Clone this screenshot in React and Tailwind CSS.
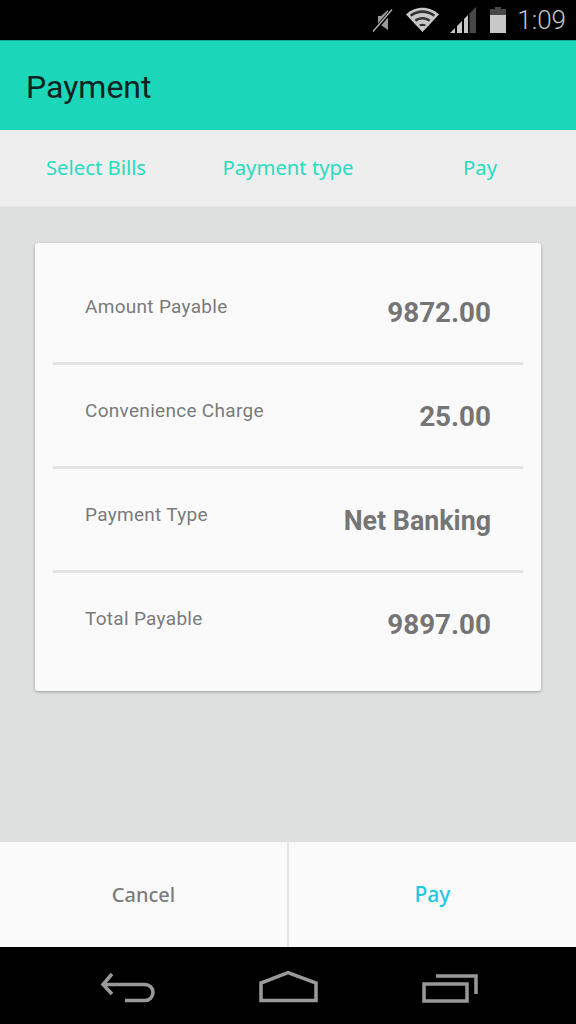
const rows = [
  { label: 'Amount Payable', value: '9872.00', size: 'text-[27.800px]' },
  { label: 'Convenience Charge', value: '25.00', size: 'text-[27.800px]' },
  { label: 'Payment Type', value: 'Net Banking', size: 'text-[26.800px]' },
  { label: 'Total Payable', value: '9897.00', size: 'text-[27.800px]' },
];

function StatusBar() {
  return (
    <div className="h-10 bg-black flex items-center justify-end">
      {/* muted speaker */}
      <svg width="24" height="26" viewBox="0 0 24 26" className="mr-[11px]">
        <path d="M7 9h3l7-6v20l-7-5H7z" fill="#9a9a9a" />
        <path d="M3 24 21 3" stroke="#000" strokeWidth="3.500" />
        <path d="M2 24.500 21 2.500" stroke="#b4b4b4" strokeWidth="1.300" />
      </svg>
      {/* wifi */}
      <svg width="33" height="26" viewBox="0 0 33 26" className="mr-[11px]">
        <path d="M16.500 25 0 7.500C9-1.500 24-1.500 33 7.500L16.500 25z" fill="#c8c8c8" />
        <path d="M3.800 7.800c7.500-6 18-6 25.400 0l-1.700 1.900c-6.500-5-15.500-5-22 0zM8.500 12.800c5-3.800 11-3.800 16 0l-1.700 1.900c-4-3-8.600-3-12.600 0zM13 17.700c2.200-1.300 4.800-1.300 7 0l-1.600 1.700c-1.200-.6-2.600-.6-3.800 0z" fill="#000" opacity="0.75" />
      </svg>
      {/* signal */}
      <svg width="26" height="26" viewBox="0 0 26 26" className="mr-[14px]">
        <path d="M19.500 6.500 26 0v26h-6.500z" fill="#484848" />
        <path d="M0 26 5 21v5zM7 26v-7l5-5v12zM14 26V12l4-4v18z" fill="#c8c8c8" />
      </svg>
      {/* battery */}
      <svg width="16" height="26" viewBox="0 0 16 26" className="mr-[11px]">
        <path d="M5 0h6v2h5v24H0V2h5z" fill="#484848" />
        <path d="M0 8h16v18H0z" fill="#c8c8c8" />
      </svg>
      <span className="mr-[10px] font-['Roboto',sans-serif] text-[26px] leading-none font-light text-[#c4c4c4]">1:09</span>
    </div>
  );
}

function NavBar() {
  return (
    <div className="h-[77px] bg-black">
      <svg width="576" height="77" viewBox="0 0 576 77" fill="none" stroke="#999999" strokeWidth="3.500">
        <path d="M112 27 103 37.500 112 47M103 37.500h42a8 8 0 0 1 0 16h-20" />
        <path d="M261 53.500V36l27-10.500L316 36v17.500z" />
        <path d="M424 37h43v17h-43zM436 29h40v18" />
      </svg>
    </div>
  );
}

export default function App() {
  return (
    <div className="w-[576px] h-[1024px] flex flex-col bg-[#dee0df] overflow-hidden font-['Roboto',sans-serif]">
      <StatusBar />
      <header className="h-[90px] bg-[#1bd6b9] flex items-center pl-[26px] border-t border-[#16a893]">
        <h1 className="text-[32px] leading-none text-[#0f2420] pt-[2px]">Payment</h1>
      </header>

      <nav className="h-[77px] bg-[#eeeeee] grid grid-cols-3 items-center font-['Noto_Sans',sans-serif] text-[20.300px] text-[#27dcc0] border-b border-[#e4e6e5] pb-[2px]">
        <span className="text-center">Select Bills</span>
        <span className="text-center">Payment type</span>
        <span className="text-center">Pay</span>
      </nav>

      <main className="flex-1 px-[35px] pt-[36px]">
        <div className="h-[448px] bg-[#fafafa] rounded-[3px] shadow-[0_1px_3px_rgba(0,0,0,0.3)] pt-[18px] px-[18px]">
          {rows.map((row, i) => (
            <div
              key={row.label}
              className={`h-[104px] flex justify-between px-[32px] ${i < 3 ? 'border-b-[3px] border-[#e4e4e4]' : ''}`}
            >
              <span className="pt-[34px] text-[19px] tracking-[0.3px] leading-[24px] text-[#7a7a7a]">{row.label}</span>
              <span className={`pt-[36px] leading-[32px] font-bold text-[#757575] ${row.size}`}>{row.value}</span>
            </div>
          ))}
        </div>
      </main>

      <footer className="h-[105px] bg-[#fafafa] flex font-['Noto_Sans',sans-serif] text-[20px] font-medium">
        <button className="w-[289px] border-r-2 border-[#e6e6e6] text-[#7c7c7c]">Cancel</button>
        <button className="flex-1 text-[#1cc9e4] text-[21px]">Pay</button>
      </footer>
      <NavBar />
    </div>
  );
}
